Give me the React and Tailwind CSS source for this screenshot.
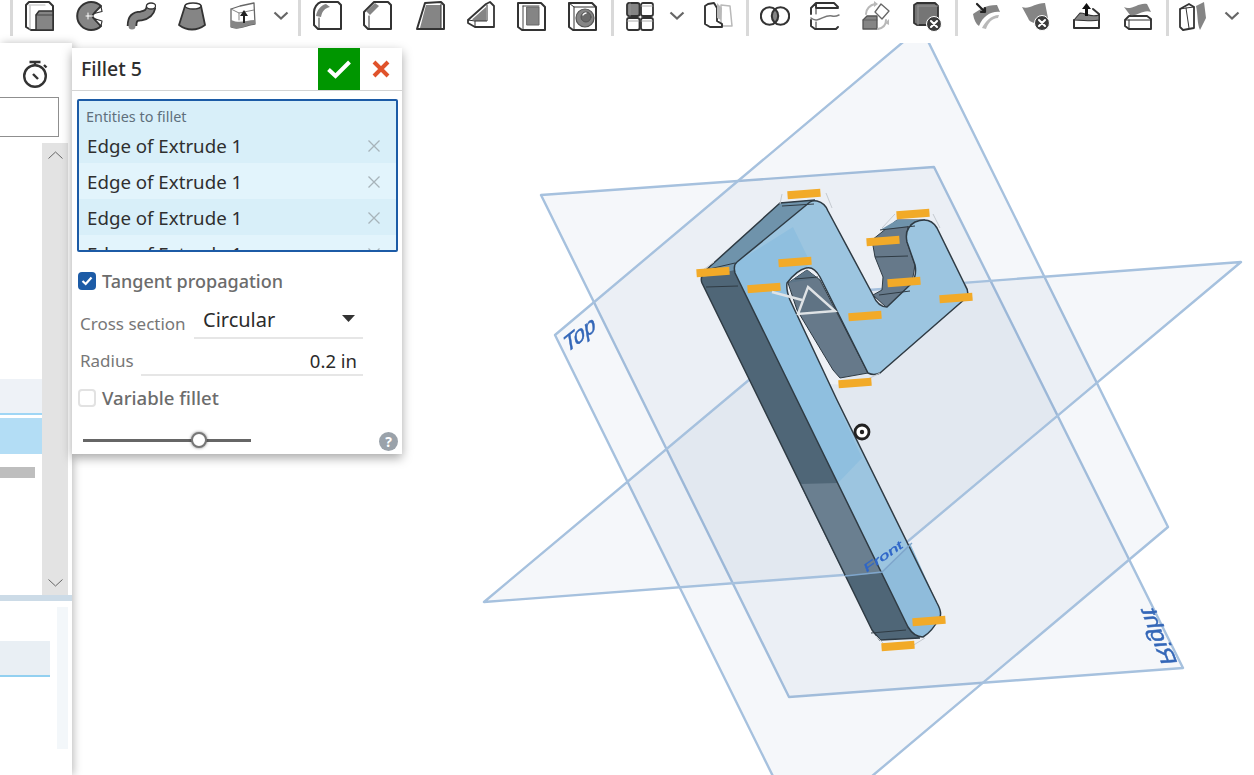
import React from 'react';

const D = '#333333';
const G = '#858585';
const L = '#b9b9b9';

// 30x30 toolbar icon shell
const Ico = ({ children }) => (
  <svg width="30" height="32" viewBox="0 0 30 32" fill="none" strokeLinejoin="round" strokeLinecap="round" className="shrink-0">
    {children}
  </svg>
);

const Extrude = () => (
  <Ico>
    <path d="M1 5l3-3h20l4 4v24H6l-5-3z" fill="#fff" stroke={D} strokeWidth="2" />
    <path d="M4 5h16M5 6v23" stroke={L} strokeWidth="1.2" />
    <path d="M11 15l3-4h14v19H11z" fill={G} stroke={D} strokeWidth="1.5" />
    <path d="M11 15h17" stroke={D} strokeWidth="0.8" />
  </Ico>
);
const Revolve = () => (
  <Ico>
    <path d="M26 6A14 14 0 1 0 26 26L19 18.5A3 3 0 0 1 19 13.5Z" fill={G} stroke={D} strokeWidth="2" />
    <path d="M11 16h7M13 13v6" stroke="#fff" strokeWidth="1" />
    <path d="M19 13.5l7-7 1 5zM19 18.5l7 7.5 1-5z" fill="#fff" stroke={D} strokeWidth="1.2" />
  </Ico>
);
const Sweep = () => (
  <Ico>
    <path d="M6 26C6 17 10 16 15 16C21 15 24 13 25 7" stroke={D} strokeWidth="10.5" strokeLinecap="butt" />
    <path d="M6 26C6 17 10 16 15 16C21 15 24 13 25 7" stroke={G} strokeWidth="7" />
    <ellipse cx="25" cy="6" rx="4.6" ry="3" fill="#fff" stroke={D} strokeWidth="1.3" />
  </Ico>
);
const Loft = () => (
  <Ico>
    <path d="M7 6L1 25C9 31 19 31 27 25L23 6Z" fill={G} stroke={D} strokeWidth="1.8" />
    <ellipse cx="15" cy="6" rx="8" ry="3" fill="#fff" stroke={D} strokeWidth="1.3" />
  </Ico>
);
const Thicken = () => (
  <Ico>
    <path d="M3 9L12 6L26 3L27 24C20 24 12 31 3 27Z" fill="#fff" stroke="#666" strokeWidth="1.3" />
    <path d="M3 20C12 24 18 20 27 20V24C20 24 12 31 3 27Z" fill={G} />
    <path d="M3 9L11 13L26 10M11 13V20" stroke="#777" strokeWidth="0.9" />
    <path d="M15 23V16H12L16 10L20 16H17V23Z" fill="#222" />
  </Ico>
);
const Fillet = () => (
  <Ico>
    <path d="M8 2H25L28 5V29H5L1 25V12C1 8 4 3 8 2Z" fill="#fff" stroke={D} strokeWidth="2" />
    <path d="M3 16C4 10 8 5 13 4L17 7C12 8 9 11 8 17Z" fill={G} />
    <path d="M6 18V28" stroke={D} strokeWidth="1" />
  </Ico>
);
const Chamfer = () => (
  <Ico>
    <path d="M11 2H25L28 5V29H5L1 25V12Z" fill="#fff" stroke={D} strokeWidth="2" />
    <path d="M3 11L12 3L16 6L7 15Z" fill={G} />
    <path d="M6 16V28" stroke={D} strokeWidth="1" />
  </Ico>
);
const Draft = () => (
  <Ico>
    <path d="M9 3L25 2L28 5V29H1Z" fill="#fff" stroke={D} strokeWidth="2" />
    <path d="M10 5H25V28H4Z" fill={G} />
    <path d="M25 4V29" stroke={D} strokeWidth="1" />
  </Ico>
);
const Rib = () => (
  <Ico>
    <path d="M2 20L20 4L24 2L28 6V27H9L2 23Z" fill="#fff" stroke={D} strokeWidth="1.8" />
    <path d="M6 19.5L20 7V21H10Z" fill={G} />
    <path d="M21 5V21H9L2 20M9 21V27" stroke={D} strokeWidth="1" />
  </Ico>
);
const Shell = () => (
  <Ico>
    <path d="M1 3H24L28 7V30H5L1 27Z" fill="#fff" stroke={D} strokeWidth="2" />
    <path d="M6 6V29M6 6H22" stroke={D} strokeWidth="0.9" />
    <rect x="10" y="7" width="12" height="18" fill={G} stroke="#666" strokeWidth="1" />
  </Ico>
);
const Hole = () => (
  <Ico>
    <path d="M1 3H24L28 7V30H5L1 27Z" fill="#fff" stroke={D} strokeWidth="2" />
    <path d="M6 7V29M1 3L6 7H28" stroke={D} strokeWidth="1" />
    <circle cx="17" cy="18" r="9" fill={G} stroke="#555" strokeWidth="1.2" />
    <circle cx="18" cy="17" r="5" fill="#6a6a6a" stroke="#555" strokeWidth="1" />
    <path d="M15 15a4 4 0 0 1 3-2" stroke="#fff" strokeWidth="1.4" />
  </Ico>
);
const Pattern = () => (
  <Ico>
    <rect x="2" y="3" width="12.5" height="13" rx="2" fill={G} stroke={D} strokeWidth="1.8" />
    <rect x="16" y="3" width="12" height="13" rx="2" fill="#fff" stroke={D} strokeWidth="1.8" />
    <rect x="2" y="18" width="12.5" height="12" rx="2" fill="#fff" stroke={D} strokeWidth="1.8" />
    <rect x="16" y="18" width="12" height="12" rx="2" fill="#fff" stroke={D} strokeWidth="1.8" />
    <path d="M16 6h12M2 21h12M16 21h12M5 3v13" stroke="#999" strokeWidth="0.8" />
  </Ico>
);
const Mirror = () => (
  <Ico>
    <path d="M18 5L27 6L29 26H20L18 22Z" fill="#fff" stroke={L} strokeWidth="1.5" />
    <path d="M11 3L14 8V21L19 24V27H7L2 24V6L5 4Z" fill="#fff" stroke={D} strokeWidth="1.9" />
    <path d="M14 3L19 8L18 20L14 18Z" fill={L} />
  </Ico>
);
const Boolean_ = () => (
  <Ico>
    <path d="M15 9.5a9 9 0 0 1 0 13a9 9 0 0 1 0-13z" fill={G} />
    <circle cx="9.5" cy="16" r="8.7" stroke={D} strokeWidth="2.1" />
    <circle cx="20.5" cy="16" r="8.7" stroke={D} strokeWidth="2.1" />
  </Ico>
);
const Split = () => (
  <Ico>
    <path d="M1 8L6 3H24L28 7M1 8V14M1 20V26L5 29H26L28 27M6 3L6 8H28" fill="#fff" stroke={D} strokeWidth="1.9" />
    <path d="M1 18C8 24 14 14 22 16C25 17 27 16 29 15" stroke="#777" strokeWidth="1.5" />
    <path d="M6 9V14M6 22V28" stroke={D} strokeWidth="1" />
  </Ico>
);
const Transform = () => (
  <Ico>
    <path d="M2 20L6 16H16V29H2Z" fill={G} stroke="#555" strokeWidth="1.3" />
    <path d="M2 20H16" stroke="#555" strokeWidth="0.8" />
    <path d="M20 4L28 11L21 19L14 12Z" fill="#fff" stroke="#666" strokeWidth="1.3" />
    <path d="M5 14C5 9 9 5 14 4M25 20C25 25 22 28 17 29" stroke={L} strokeWidth="2" />
    <path d="M13 1L17 4L13 7zM24 23L28 19L28 25z" fill={L} />
  </Ico>
);
const X = ({ cx, cy }) => (
  <g>
    <circle cx={cx} cy={cy} r="7.5" fill="#3c3c3c" stroke="#fff" strokeWidth="1" />
    <path d={`M${cx - 3} ${cy - 3}l6 6M${cx + 3} ${cy - 3}l-6 6`} stroke="#fff" strokeWidth="2.1" />
  </g>
);
const DelPart = () => (
  <Ico>
    <path d="M2 5L5 3H23L26 6V25H5L2 23Z" fill="#757575" stroke={D} strokeWidth="1.8" />
    <path d="M6 6H26M6 6V25" stroke="#999" strokeWidth="0.9" />
    <X cx={22} cy={24} />
  </Ico>
);
const MoveFace = () => (
  <Ico>
    <path d="M2 14C8 10 14 5 26 5L29 12C20 11 12 16 8 26C5 24 3 20 2 14Z" fill={G} />
    <path d="M11 28C14 22 20 15 28 15L27 18C21 18 17 23 15 29Z" fill={L} />
    <path d="M6 4L14 12M10 12H14V8" stroke="#222" strokeWidth="2.2" />
  </Ico>
);
const DelFace = () => (
  <Ico>
    <path d="M1 7C8 10 14 3 24 3L27 18L20 25C15 22 9 24 7 18Z" fill={G} />
    <X cx={21} cy={23} />
  </Ico>
);
const Replace = () => (
  <Ico>
    <path d="M2 20V28H27V14L21 9" fill="#fff" stroke={D} strokeWidth="2" />
    <path d="M2 20L8 13C14 13 18 18 27 15V20C20 22 12 20 2 20Z" fill={G} stroke={D} strokeWidth="1.1" />
    <path d="M13 16V9H10L14.5 3L19 9H16V16Z" fill="#111" />
  </Ico>
);
const Offset = () => (
  <Ico>
    <path d="M2 20L6 16H24L28 19V29H6L2 26Z" fill="#fff" stroke={D} strokeWidth="1.9" />
    <path d="M3 20H28M6 20V29" stroke={D} strokeWidth="1" />
    <path d="M1 7C8 11 16 2 24 4L28 12C20 9 14 17 7 15Z" fill={G} />
  </Ico>
);
const Wrap = () => (
  <Ico>
    <path d="M2 9L11 4L16 7V28L5 30L2 27Z" fill="#fff" stroke={D} strokeWidth="1.8" />
    <path d="M8 8L11 28M2 9L8 8L16 7" stroke={D} strokeWidth="1" />
    <path d="M18 6L26 2L28 18L22 30C19 24 20 14 18 6Z" fill={G} />
  </Ico>
);
const Chev = () => (
  <svg width="16" height="32" viewBox="0 0 16 32" fill="none" className="shrink-0">
    <path d="M1.5 12.5L8 18.5L14.5 12.5" stroke="#666" strokeWidth="2.2" />
  </svg>
);
const Sep = ({ m }) => <div className={`${m} h-[36px] w-[3px] shrink-0 bg-[#d9d9d9]`} />;

function Toolbar() {
  return (
    <div className="flex h-[43px] shrink-0 items-start bg-white">
      <Sep m="ml-[10px]" />
      <div className="ml-[12px]"><Extrude /></div>
      <div className="ml-[20px]"><Revolve /></div>
      <div className="ml-[21px]"><Sweep /></div>
      <div className="ml-[22px]"><Loft /></div>
      <div className="ml-[20px]"><Thicken /></div>
      <div className="ml-[15px]"><Chev /></div>
      <Sep m="ml-[9px]" />
      <div className="ml-[12px]"><Fillet /></div>
      <div className="ml-[20px]"><Chamfer /></div>
      <div className="ml-[23px]"><Draft /></div>
      <div className="ml-[20px]"><Rib /></div>
      <div className="ml-[21px]"><Shell /></div>
      <div className="ml-[21px]"><Hole /></div>
      <Sep m="ml-[13px]" />
      <div className="ml-[11px]"><Pattern /></div>
      <div className="ml-[14px]"><Chev /></div>
      <div className="ml-[18px]"><Mirror /></div>
      <Sep m="ml-[13px]" />
      <div className="ml-[11px]"><Boolean_ /></div>
      <div className="ml-[20px]"><Split /></div>
      <div className="ml-[21px]"><Transform /></div>
      <div className="ml-[21px]"><DelPart /></div>
      <Sep m="ml-[13px]" />
      <div className="ml-[13px]"><MoveFace /></div>
      <div className="ml-[20px]"><DelFace /></div>
      <div className="ml-[21px]"><Replace /></div>
      <div className="ml-[21px]"><Offset /></div>
      <Sep m="ml-[13px]" />
      <div className="ml-[9px]"><Wrap /></div>
      <div className="ml-[16px]"><Chev /></div>
    </div>
  );
}

function LeftPanel() {
  return (
    <div className="z-10 flex h-full w-[72px] shrink-0 flex-col bg-white shadow-[2px_0_8px_rgba(0,0,0,0.25)]">
      <div className="flex justify-center pr-[3px] pt-[17px]">
        <svg width="28" height="28" viewBox="0 0 28 28" fill="none" stroke="#333">
          <circle cx="14" cy="16" r="10.8" strokeWidth="2.4" />
          <path d="M8.5 2h11M14 2v3M23 5l2.5 2.5" strokeWidth="2.4" />
          <path d="M12 14l5 5" strokeWidth="2.4" />
        </svg>
      </div>
      <div className="mt-[9px] h-[40px] w-[59px] border border-l-0 border-[#8f8f8f] bg-white" />
      <div className="mt-[6px] flex h-[452px]">
        <div className="flex w-[42px] flex-col">
          <div className="mt-[236px] h-[34px] bg-[#eef2f7]" />
          <div className="h-[2px] bg-[#9fd6f5]" />
          <div className="mt-[3px] h-[36px] bg-[#b3ddf5]" />
          <div className="mt-[13px] h-[11px] w-[35px] bg-[#bebebe]" />
        </div>
        <div className="flex w-[26px] flex-col items-center justify-between bg-[#e3e3e3] py-[8px]">
          <svg width="15" height="8" viewBox="0 0 15 8" fill="none"><path d="M0.5 7.5L7.5 1L14.5 7.5" stroke="#666" /></svg>
          <svg width="15" height="8" viewBox="0 0 15 8" fill="none"><path d="M0.5 0.5L7.5 7L14.5 0.5" stroke="#666" /></svg>
        </div>
      </div>
      <div className="h-[6px] bg-[#ccdbe7]" />
      <div className="flex">
        <div className="w-[50px] pt-[40px]">
          <div className="h-[34px] bg-[#e9eff4]" />
          <div className="h-[2px] bg-[#92d0f0]" />
        </div>
        <div className="ml-[7px] mt-[6px] h-[142px] w-[11px] bg-[#f3f7fa]" />
      </div>
    </div>
  );
}

const EDGES = [0, 1, 2, 3];

function FilletDialog() {
  return (
    <div className="absolute left-[72px] top-[5px] z-20 h-[406px] w-[330px] bg-white shadow-[0_4px_10px_rgba(0,0,0,0.35)]">
      <div className="flex h-[43px] items-start border-b border-[#d4d4d4]">
        <div className="ml-[9px] flex-1 pt-[8px] text-[19.5px] font-medium leading-[26px] text-[#2e2e2e]">Fillet 5</div>
        <div className="flex h-[42px] w-[42px] items-center justify-center bg-[#009600]">
          <svg width="26" height="20" viewBox="0 0 26 20" fill="none"><path d="M2.5 10.5L9.5 17L23.5 3" stroke="#fff" strokeWidth="4" /></svg>
        </div>
        <div className="flex h-[42px] w-[42px] items-center justify-center">
          <svg width="18" height="18" viewBox="0 0 18 18" fill="none"><path d="M2 2L16 16M16 2L2 16" stroke="#e0532b" strokeWidth="4" /></svg>
        </div>
      </div>
      <div className="ml-[5px] mr-[4px] mt-[8px] h-[153px] overflow-hidden rounded-[2px] border-2 border-[#1c5ba6] bg-[#d8eff9]">
        <div className="h-[26px] pl-[7px] pt-[6px] text-[14.4px] leading-[19px] text-[#5f6f7c]">Entities to fillet</div>
        {EDGES.map(i => (
          <div key={i} className={`flex h-[36px] shrink-0 items-center justify-between pl-[8px] pr-[16px] pt-[2px] text-[18.7px] text-[#2f2f2f] ${i % 2 ? 'bg-[#e2f4fc]' : 'bg-[#d8eff9]'}`}>
            <span>Edge of Extrude 1</span>
            <svg width="12" height="12" viewBox="0 0 12 12" fill="none"><path d="M0.5 0.5L11.5 11.5M11.5 0.5L0.5 11.5" stroke="#a7b3ba" strokeWidth="1.3" /></svg>
          </div>
        ))}
      </div>
      <div className="ml-[6px] mt-[17px] flex h-[24px] items-center gap-[6px] text-[18px] font-medium text-[#6c6c6c]">
        <div className="flex h-[18px] w-[18px] items-center justify-center rounded-[4px] bg-[#1c5ba6]">
          <svg width="12" height="10" viewBox="0 0 12 10" fill="none"><path d="M1.5 5L4.7 8L10.5 1.5" stroke="#fff" strokeWidth="2.2" /></svg>
        </div>
        Tangent propagation
      </div>
      <div className="mt-[11px] flex h-[35px] items-start pl-[8px]">
        <span className="w-[114px] pt-[9px] text-[17px] leading-[22px] text-[#777]">Cross section</span>
        <div className="flex h-[35px] w-[169px] items-start justify-between border-b-2 border-[#e6e6e6] pl-[9px] pr-[8px]">
          <span className="pt-[2px] text-[20px] leading-[28px] text-[#2b2b2b]">Circular</span>
          <svg className="mt-[11px]" width="13" height="7" viewBox="0 0 13 7"><path d="M0 0H13L6.5 7Z" fill="#333" /></svg>
        </div>
      </div>
      <div className="mt-[1px] flex h-[36px] items-start pl-[8px]">
        <span className="w-[61px] pt-[10px] text-[17px] leading-[22px] text-[#777]">Radius</span>
        <div className="h-[36px] w-[222px] border-b-2 border-[#e6e6e6] pr-[6px] pt-[7px] text-right text-[18.5px] leading-[28px] text-[#2b2b2b]">0.2 in</div>
      </div>
      <div className="ml-[6px] mt-[10px] flex h-[24px] items-center gap-[6px] text-[18.6px] font-medium text-[#6c6c6c]">
        <div className="h-[18px] w-[18px] rounded-[4px] border-2 border-[#e2e2e2] bg-white" />
        Variable fillet
      </div>
      <div className="relative ml-[11px] mt-[29px] h-[3px] w-[168px] bg-[#666]">
        <div className="absolute left-[108px] top-[-7px] h-[16px] w-[16px] rounded-full border-2 border-[#777] bg-white shadow-[0_0_3px_rgba(0,0,0,0.5)]" />
      </div>
      <div className="absolute bottom-[3px] right-[4px] flex h-[19px] w-[19px] items-center justify-center rounded-full bg-[#9aa2aa] text-[14px] font-bold leading-none text-white">?</div>
    </div>
  );
}

const ORANGE = [
  [804, 194], [913, 214], [883, 241], [795, 262], [713, 272], [764, 288],
  [904, 282], [865, 316], [956, 298], [855, 383], [929, 621], [898, 646],
];

function Viewport() {
  const plane = { fill: 'rgba(85,125,170,0.06)', stroke: '#a6c1de', strokeWidth: 2.4, strokeLinejoin: 'round' };
  const edge = { stroke: '#2f3b44', strokeWidth: 1.5, strokeLinejoin: 'round', fill: 'none' };
  return (
    <div className="h-full flex-1 overflow-hidden">
      <svg width="1182" height="732" viewBox="72 43 1182 732" className="block blur-[0.6px]">
        <polygon points="541,195 934,167 1183,668 789,697" {...plane} />
        <polygon points="921,27 1168,527 802,835 555,335" {...plane} />
        <polygon points="484,602 870,573 1241,262 855,291" {...plane} />

        {/* Plane labels */}
        <text transform="matrix(0.78,-0.62,0.16,0.98,566,354)" fontFamily="'Liberation Sans', sans-serif" fontSize="24" fill="#3467b8" stroke="#3467b8" strokeWidth="0.5">Top</text>
        {/* seen from behind, so the glyphs come out mirrored */}
        <text transform="matrix(-0.38,-1,-0.95,0.07,1162,665)" fontFamily="'Liberation Sans', sans-serif" fontSize="24" fill="#3467b8" stroke="#3467b8" strokeWidth="0.5">Right</text>

        {/* Wall surfaces */}
        <path d="M702 283C700 278 702 274 706 270L780 203L815 200L737 262L735 273L908 627L920 638L880 640L872 630Z" fill="#4f6677" />
        <path d="M706 270L780 203L815 200L737 262L735 270L703 277Z" fill="#6f93ab" />
        <path d="M800 484L838 483L882 573L845 576Z" fill="#6a7f90" />
        <path d="M872 240L897 220L925 220L908 224L907 242L915 265L912 283L887 308L873 295L882 290L883 277L875 257Z" fill="#66798a" stroke="#2f3b44" strokeWidth="1" />
        <path d="M880 230L897 220L925 220L908 226Z" fill="#6f93ab" />
        <path d="M790 298L833 370L840 378L847 385L828 384Z" fill="#eef1f6" />
        <path d="M788 283L807 270L820 280L868 373L840 378L833 370L797 310Z" fill="#66798a" stroke="#2f3b44" strokeWidth="1" />
        <path d="M788 283L807 270L820 280L819 278Z" fill="#5c7487" />

        {/* Front face */}
        <path d="M817 201Q825 203 828 211L873 295Q878 307 887 307L912 283Q917 275 915 265L907 242Q904 228 915 222Q930 216 937 228L965 285Q970 293 966 298L880 373Q874 376 868 373L820 277Q814 266 806 268Q797 270 787 283Q786 290 790 300L837 400L937 603Q942 612 940 617Q932 632 923 637Q914 637 908 627L735 273Q733 265 737 262L810 202Q813 200 817 201Z" fill="#9cc5e0" />
        <path d="M737 262L793 227L810 262L806 268Q797 270 787 283Q786 290 790 300L862 458L838 483L735 273Q733 265 737 262Z" fill="#8fbfdf" />
        <path d="M882 572L910 543L937 603Q942 612 940 617Q932 632 923 637Q914 637 908 627Z" fill="#8fbcdb" />
        <path d="M817 201Q825 203 828 211L873 295Q878 307 887 307L912 283Q917 275 915 265L907 242Q904 228 915 222Q930 216 937 228L965 285Q970 293 966 298L880 373Q874 376 868 373L820 277Q814 266 806 268Q797 270 787 283Q786 290 790 300L837 400L937 603Q942 612 940 617Q932 632 923 637Q914 637 908 627L735 273Q733 265 737 262L810 202Q813 200 817 201Z" {...edge} />
        <path d="M702 283C700 278 702 274 706 270L780 203L815 200M702 283L872 630L880 640L920 638" {...edge} />

        {/* Seams */}
        <path d="M706 287L738 286M705 270L735 263M782 206L814 204M875 257L908 256M879 295L910 291M880 230L915 226M795 279L818 277M871 633L906 630" stroke="#2f3b44" strokeWidth="1" fill="none" />
        <path d="M845 576L882 572L912 543" stroke="#7fa6cc" strokeWidth="1.4" fill="none" />

        {/* Selected edge markers */}
        <path d="M700 272L714 262M782 194L780 204M826 193L832 208M949 298L967 295M860 383L880 373M886 646L876 636M912 646L925 638M895 214L882 228M933 214L940 228" stroke="#c4c9cf" strokeWidth="1" fill="none" />
        {ORANGE.map(([x, y], i) => (
          <rect key={i} x={x - 16.5} y={y - 4} width="33" height="8" fill="#f2aa28" transform={`rotate(-4 ${x} ${y})`} />
        ))}

        {/* Preview arrow */}
        <path d="M808 287L835 311L798 314Z" fill="#5f7384" stroke="#dfe3e6" strokeWidth="2.4" />
        <path d="M772 292L802 300" stroke="#dfe3e6" strokeWidth="2.4" />

        {/* Front label */}
        <text transform="matrix(0.8,-0.55,0.2,0.55,866,573)" fontFamily="'Liberation Sans', sans-serif" fontSize="20" fill="#2f66c8" stroke="#2f66c8" strokeWidth="0.6">Front</text>

        {/* Mate connector */}
        <circle cx="862" cy="432" r="7" fill="#fff" stroke="#222" strokeWidth="2.8" />
        <circle cx="862" cy="432" r="2.2" fill="#222" />
      </svg>
    </div>
  );
}

export default function App() {
  return (
    <div className="flex h-[775px] w-[1254px] flex-col overflow-hidden bg-white font-['Noto_Sans',sans-serif]">
      <Toolbar />
      <div className="relative flex min-h-0 flex-1">
        <LeftPanel />
        <Viewport />
        <FilletDialog />
      </div>
    </div>
  );
}
